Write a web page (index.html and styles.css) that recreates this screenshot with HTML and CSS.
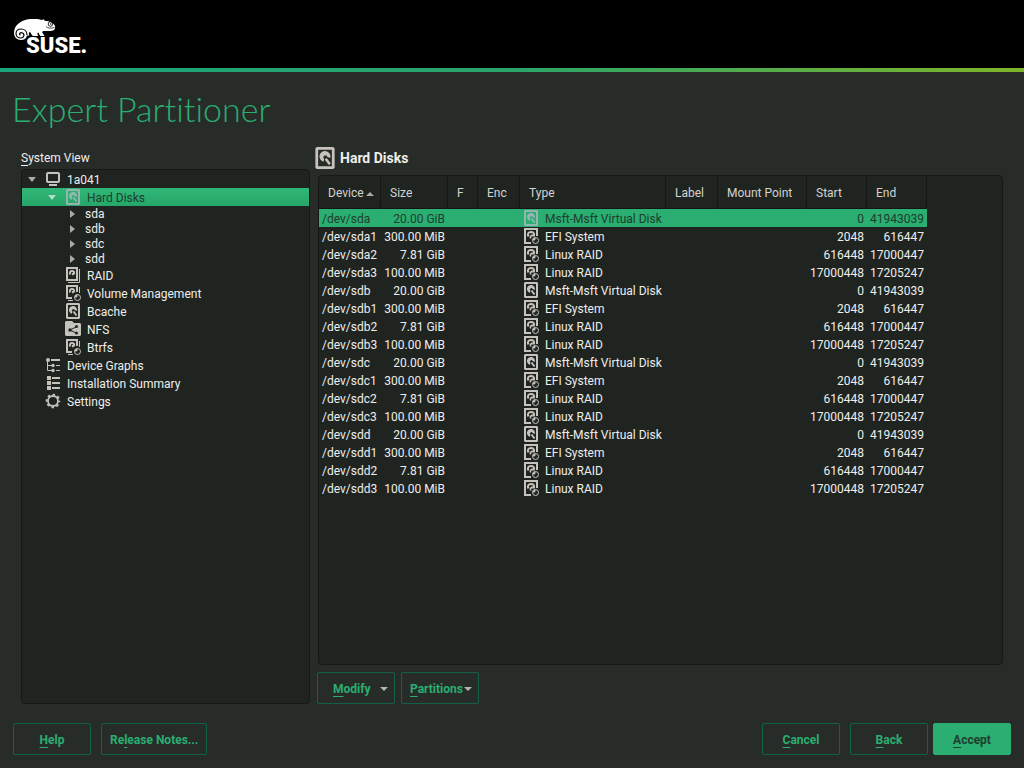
FILE: index.html
```html
<!DOCTYPE html>
<html lang="en">
<head>
<meta charset="utf-8">
<meta name="viewport" content="width=device-width, initial-scale=1">
<title>Expert Partitioner</title>
<link rel="stylesheet" href="styles.css">
</head>
<body>
<svg class="sprites" aria-hidden="true">
  <symbol id="disk" viewBox="0 0 16 16">
    <path fill="currentColor" fill-rule="evenodd" d="M2 0h12l1 1v14l-1 1H2l-1-1V1zM3 2v12h10V2z"/>
    <path fill="currentColor" d="M7 10.800A4 4 0 1 1 11.800 8L9.600 7A1.400 1.400 0 1 0 7.400 8.600z"/>
    <path stroke="currentColor" stroke-width="1.800" d="M8.500 8.500l3 4"/>
  </symbol>
  <symbol id="raid" viewBox="0 0 16 16">
    <path fill="none" stroke="currentColor" stroke-width="2" d="M2 1h10v12H2z"/>
    <path fill="none" stroke="currentColor" d="M14.500 2v13.500H3"/>
    <path fill="none" stroke="currentColor" stroke-width="2" d="M5 7.500C4.500 5 5.500 4 7 4s2.500 1 2 2.500L7 7.500"/>
  </symbol>
  <symbol id="volume" viewBox="0 0 16 16">
    <path fill="none" stroke="currentColor" stroke-width="2" d="M7 13H2V1h10v6"/>
    <path fill="none" stroke="currentColor" d="M14.500 2v6M3 15.500h5"/>
    <path fill="none" stroke="currentColor" stroke-width="2" d="M5 7.500C4.500 5 5.500 4 7 4s2.500 1 2 2.500L7 7.500"/>
    <circle cx="12.500" cy="12.500" r="3" fill="none" stroke="currentColor" stroke-width="1"/>
    <path fill="currentColor" d="M9.500 12.500a3 3 0 0 1 3-3v2l-1 1z"/>
  </symbol>
  <symbol id="partition" viewBox="0 0 16 16">
    <path fill="none" stroke="currentColor" stroke-width="2" d="M8 15H2V1h12v7"/>
    <path fill="none" stroke="currentColor" stroke-width="2" d="M5.500 8.500C4 6 5.500 4 8 4s3.500 1.500 3 3.500L8 7.500"/>
    <path stroke="currentColor" stroke-width="1.600" d="M7.500 7.500v3"/>
    <circle cx="12.500" cy="12.500" r="3" fill="none" stroke="currentColor" stroke-width="1"/>
    <path fill="currentColor" d="M9.500 12.500a3 3 0 0 1 3-3v2l-1 1z"/>
  </symbol>
  <symbol id="monitor" viewBox="0 0 16 16">
    <rect x="2" y="2" width="12" height="9" rx="1" fill="none" stroke="currentColor" stroke-width="2"/>
    <path fill="currentColor" d="M4 13h8v2H4z"/>
  </symbol>
  <symbol id="share" viewBox="0 0 16 16">
    <path fill="currentColor" d="M0 1l1-1h6l2 2h6l1 1v11l-1 1H1l-1-1z"/>
    <path fill="none" stroke="#1f2421" d="M12 5.500L5 9l7 3.500"/>
    <g fill="#1f2421"><circle cx="11.500" cy="5.500" r="1.500"/><circle cx="5" cy="9" r="1.700"/><circle cx="11.500" cy="12" r="1.500"/></g>
  </symbol>
  <symbol id="graph" viewBox="0 0 16 16">
    <g fill="currentColor"><circle cx="3" cy="3" r="2"/><circle cx="8" cy="8.500" r="1.700"/><circle cx="8" cy="13.500" r="1.700"/><path d="M6 2h9v2H6zM11 8h4v1h-4zM11 13h4v1h-4z"/></g>
    <path fill="none" stroke="currentColor" d="M2.500 4v9.500H7M2.500 8.500H7"/>
  </symbol>
  <symbol id="list" viewBox="0 0 16 16">
    <path fill="currentColor" d="M2 1h4v4H2zM2 6h4v4H2zM2 11h4v4H2zM7 2h8v2H7zM7 7h8v2H7zM7 12h8v2H7z"/>
  </symbol>
  <symbol id="gear" viewBox="0 0 16 16">
    <circle cx="8" cy="8" r="5" fill="none" stroke="currentColor" stroke-width="1.800"/>
    <circle cx="8" cy="8" r="6.400" fill="none" stroke="currentColor" stroke-width="1.800" stroke-dasharray="2.500 2.526" stroke-dashoffset="1.250"/>
  </symbol>
</svg>

<header class="banner">
  <div class="logo">
    <svg class="chameleon" viewBox="0 0 42 22" aria-hidden="true">
      <path fill="#fff" d="M0 14C0 6 7 1 16 0c5-.5 9 0 12 1l2-.8.5 1.500C36 2 40 4 41 7c.3 2 0 4-2 4.500-3 .8-6 .5-8 .5-3 0-3.500 1-2 2.500l1.500 2.500h-4c-1-1-1.500-2-2-3.500-1 .2-1.500 1-1 2l.7 1.500H19c-1.500-1-1.500-2-2.500-3.500-1.500-.5-2 .5-1.500 2l.5 1H13c-.5 3-3 4.500-6 4.500-4 0-7-3-7-7z"/>
      <path fill="none" stroke="#000" stroke-width="1.200" d="M13 16c0-4-3-6-6-6s-5 2-5 4.500S4 19 7 19s4-4 1.500-5-4 1.500-2 2"/>
      <circle cx="36.500" cy="5" r="2.300" fill="none" stroke="#000" stroke-width=".8"/><circle cx="36.800" cy="5" r=".8"/>
      <path fill="none" stroke="#000" stroke-width=".7" d="M32 7.500c2 2 5 2 8.500 1"/>
    </svg>
    <span class="wordmark">SUSE.</span>
  </div>
</header>

<main class="page">
  <h1 class="title">Expert Partitioner</h1>
  <div class="workspace">
    <section class="sidebar">
      <h2 class="tree-label" id="tree-label"><u>S</u>ystem View</h2>
      <ul class="tree" role="tree" aria-labelledby="tree-label">
        <li class="node" role="treeitem"><button class="toggle open" aria-label="Collapse 1a041"></button><svg class="icon"><use href="#monitor"/></svg><span>1a041</span></li>
        <li class="node level-1 selected" role="treeitem" aria-selected="true"><button class="toggle open" aria-label="Collapse Hard Disks"></button><svg class="icon"><use href="#disk"/></svg><span>Hard Disks</span></li>
        <li class="node disk" role="treeitem"><button class="toggle" aria-label="Expand sda"></button><span>sda</span></li>
        <li class="node disk" role="treeitem"><button class="toggle" aria-label="Expand sdb"></button><span>sdb</span></li>
        <li class="node disk" role="treeitem"><button class="toggle" aria-label="Expand sdc"></button><span>sdc</span></li>
        <li class="node disk" role="treeitem"><button class="toggle" aria-label="Expand sdd"></button><span>sdd</span></li>
        <li class="node level-2" role="treeitem"><svg class="icon"><use href="#raid"/></svg><span>RAID</span></li>
        <li class="node level-2" role="treeitem"><svg class="icon"><use href="#volume"/></svg><span>Volume Management</span></li>
        <li class="node level-2" role="treeitem"><svg class="icon"><use href="#disk"/></svg><span>Bcache</span></li>
        <li class="node level-2" role="treeitem"><svg class="icon"><use href="#share"/></svg><span>NFS</span></li>
        <li class="node level-2" role="treeitem"><svg class="icon"><use href="#volume"/></svg><span>Btrfs</span></li>
        <li class="node leaf" role="treeitem"><svg class="icon"><use href="#graph"/></svg><span>Device Graphs</span></li>
        <li class="node leaf" role="treeitem"><svg class="icon"><use href="#list"/></svg><span>Installation Summary</span></li>
        <li class="node leaf" role="treeitem"><svg class="icon"><use href="#gear"/></svg><span>Settings</span></li>
      </ul>
    </section>
    <section class="content">
      <h2 class="heading"><svg class="heading-icon"><use href="#disk"/></svg>Hard Disks</h2>
      <div class="table-frame">
        <table class="devices">
          <colgroup><col class="c-device"><col class="c-size"><col class="c-f"><col class="c-enc"><col class="c-type"><col class="c-label"><col class="c-mount"><col class="c-start"><col class="c-end"></colgroup>
          <thead><tr><th class="sorted">Device</th><th>Size</th><th>F</th><th>Enc</th><th>Type</th><th>Label</th><th>Mount Point</th><th>Start</th><th>End</th></tr></thead>
          <tbody>
            <tr class="selected"><td>/dev/sda</td><td class="num">20.00 GiB</td><td></td><td></td><td class="type"><svg class="icon"><use href="#disk"/></svg>Msft-Msft Virtual Disk</td><td></td><td></td><td class="num">0</td><td class="num">41943039</td></tr>
            <tr><td>/dev/sda1</td><td class="num">300.00 MiB</td><td></td><td></td><td class="type"><svg class="icon"><use href="#partition"/></svg>EFI System</td><td></td><td></td><td class="num">2048</td><td class="num">616447</td></tr>
            <tr><td>/dev/sda2</td><td class="num">7.81 GiB</td><td></td><td></td><td class="type"><svg class="icon"><use href="#partition"/></svg>Linux RAID</td><td></td><td></td><td class="num">616448</td><td class="num">17000447</td></tr>
            <tr><td>/dev/sda3</td><td class="num">100.00 MiB</td><td></td><td></td><td class="type"><svg class="icon"><use href="#partition"/></svg>Linux RAID</td><td></td><td></td><td class="num">17000448</td><td class="num">17205247</td></tr>
            <tr><td>/dev/sdb</td><td class="num">20.00 GiB</td><td></td><td></td><td class="type"><svg class="icon"><use href="#disk"/></svg>Msft-Msft Virtual Disk</td><td></td><td></td><td class="num">0</td><td class="num">41943039</td></tr>
            <tr><td>/dev/sdb1</td><td class="num">300.00 MiB</td><td></td><td></td><td class="type"><svg class="icon"><use href="#partition"/></svg>EFI System</td><td></td><td></td><td class="num">2048</td><td class="num">616447</td></tr>
            <tr><td>/dev/sdb2</td><td class="num">7.81 GiB</td><td></td><td></td><td class="type"><svg class="icon"><use href="#partition"/></svg>Linux RAID</td><td></td><td></td><td class="num">616448</td><td class="num">17000447</td></tr>
            <tr><td>/dev/sdb3</td><td class="num">100.00 MiB</td><td></td><td></td><td class="type"><svg class="icon"><use href="#partition"/></svg>Linux RAID</td><td></td><td></td><td class="num">17000448</td><td class="num">17205247</td></tr>
            <tr><td>/dev/sdc</td><td class="num">20.00 GiB</td><td></td><td></td><td class="type"><svg class="icon"><use href="#disk"/></svg>Msft-Msft Virtual Disk</td><td></td><td></td><td class="num">0</td><td class="num">41943039</td></tr>
            <tr><td>/dev/sdc1</td><td class="num">300.00 MiB</td><td></td><td></td><td class="type"><svg class="icon"><use href="#partition"/></svg>EFI System</td><td></td><td></td><td class="num">2048</td><td class="num">616447</td></tr>
            <tr><td>/dev/sdc2</td><td class="num">7.81 GiB</td><td></td><td></td><td class="type"><svg class="icon"><use href="#partition"/></svg>Linux RAID</td><td></td><td></td><td class="num">616448</td><td class="num">17000447</td></tr>
            <tr><td>/dev/sdc3</td><td class="num">100.00 MiB</td><td></td><td></td><td class="type"><svg class="icon"><use href="#partition"/></svg>Linux RAID</td><td></td><td></td><td class="num">17000448</td><td class="num">17205247</td></tr>
            <tr><td>/dev/sdd</td><td class="num">20.00 GiB</td><td></td><td></td><td class="type"><svg class="icon"><use href="#disk"/></svg>Msft-Msft Virtual Disk</td><td></td><td></td><td class="num">0</td><td class="num">41943039</td></tr>
            <tr><td>/dev/sdd1</td><td class="num">300.00 MiB</td><td></td><td></td><td class="type"><svg class="icon"><use href="#partition"/></svg>EFI System</td><td></td><td></td><td class="num">2048</td><td class="num">616447</td></tr>
            <tr><td>/dev/sdd2</td><td class="num">7.81 GiB</td><td></td><td></td><td class="type"><svg class="icon"><use href="#partition"/></svg>Linux RAID</td><td></td><td></td><td class="num">616448</td><td class="num">17000447</td></tr>
            <tr><td>/dev/sdd3</td><td class="num">100.00 MiB</td><td></td><td></td><td class="type"><svg class="icon"><use href="#partition"/></svg>Linux RAID</td><td></td><td></td><td class="num">17000448</td><td class="num">17205247</td></tr>
          </tbody>
        </table>
      </div>
      <div class="actions">
        <button class="btn menu"><span><u>M</u>odify</span></button>
        <button class="btn menu tight"><span><u>P</u>artitions</span></button>
      </div>
    </section>
  </div>
</main>

<footer class="footer">
  <button class="btn"><span><u>H</u>elp</span></button>
  <button class="btn"><span>Re<u>l</u>ease Notes...</span></button>
  <div class="wizard">
    <button class="btn"><span><u>C</u>ancel</span></button>
    <button class="btn"><span><u>B</u>ack</span></button>
    <button class="btn primary"><span><u>A</u>ccept</span></button>
  </div>
</footer>
</body>
</html>
```

FILE: styles.css
```css
* { box-sizing: border-box; }
body {
  margin: 0;
  min-height: 100vh;
  display: flex;
  flex-direction: column;
  background: #282c29;
  color: #eeeeec;
  font: 12px/18px Roboto, "Liberation Sans", sans-serif;
}
h1, h2, ul { margin: 0; padding: 0; font-weight: 400; }
u { text-decoration: underline; text-underline-offset: 3px; text-decoration-thickness: 1px; text-decoration-skip-ink: none; }
.sprites { position: absolute; width: 0; height: 0; }
.icon { width: 16px; height: 16px; flex: none; color: #c6c2bc; }

.banner {
  height: 72px;
  padding: 19px 14px 0;
  background: #000;
  border-bottom: 4px solid;
  border-image: linear-gradient(90deg, #1ba47c, #2aa56a 50%, #80b52a) 1;
}
.logo { display: grid; width: 80px; }
.chameleon { grid-area: 1 / 1; width: 42px; height: 22px; }
.wordmark {
  grid-area: 1 / 1;
  padding: 16px 0 0 12px;
  color: #fff;
  font: 900 22px/22px Roboto, sans-serif;
}

.page { flex: 1; display: flex; flex-direction: column; padding: 16px 21px 0; }
.title {
  margin-left: -9px;
  color: #2aae71;
  font: 300 34px/42px Lato, sans-serif;
  font-variant-ligatures: none;
}
.workspace {
  flex: 1;
  display: grid;
  grid-template-columns: 289fr 685fr;
  column-gap: 8px;
  padding-top: 18px;
}
.sidebar, .content { display: flex; flex-direction: column; min-width: 0; }
.tree-label { font-size: 12px; line-height: 18px; padding: 1px 0 2px; }
.tree {
  flex: 1;
  list-style: none;
  background: #1f2421;
  border: 1px solid #151816;
  border-radius: 4px;
}
.node { display: flex; align-items: center; height: 18px; padding-left: 4px; }
.node span { padding: 2px 0 0 6px; }
.level-1 { padding-left: 24px; }
.level-2 { padding-left: 43px; }
.leaf { padding-left: 23px; }
.disk { height: 15px; padding-left: 44px; }
.disk span { padding-top: 0; }
.node.selected { background: linear-gradient(#30b878, #27a66a); color: #1f3d2d; }
.toggle {
  width: 12px;
  height: 12px;
  margin-right: 7px;
  padding: 0;
  border: 0;
  background: none;
  display: grid;
  place-items: center;
}
.disk .toggle { margin-right: 1px; }
.toggle::before { content: ""; border: 4px solid transparent; border-left: 5px solid #aaa; border-right: 0; }
.toggle.open::before { border: 4px solid transparent; border-top: 5px solid #aaa; border-bottom: 0; }
.selected .toggle.open::before { border-top-color: #b4dcc8; }
.selected .icon { color: #94b5b0; }

.heading { display: flex; align-items: center; gap: 4px; height: 22px; font: 700 14px/20px Roboto, sans-serif; margin: 0 0 6px -4px; }
.heading-icon { width: 22px; height: 22px; color: #c6c2bc; }
.workspace .content { margin-top: -1px; }
.table-frame {
  flex: 1;
  background: #1f2421;
  border: 1px solid #151816;
  border-radius: 4px;
  overflow: hidden;
}
.devices { width: 608px; table-layout: fixed; border-collapse: separate; border-spacing: 0; }
.c-device { width: 62px; }
.c-size { width: 67px; }
.c-f { width: 30px; }
.c-enc { width: 42px; }
.c-type { width: 146px; }
.c-label { width: 52px; }
.c-mount { width: 89px; }
.c-start, .c-end { width: 60px; }
th {
  height: 33px;
  padding: 2px 0 0 9px;
  text-align: left;
  font-weight: 400;
  color: #d3d3d0;
  white-space: nowrap;
  border-right: 1px solid #131614;
  border-bottom: 1px solid #131614;
  border-bottom-right-radius: 3px;
}
.sorted::after {
  content: "";
  display: inline-block;
  margin-left: 2px;
  vertical-align: 1px;
  border: 4px solid transparent;
  border-bottom-color: #aaa;
  border-top: 0;
}
td { height: 18px; padding: 2px 3px 0; line-height: 16px; white-space: nowrap; }
.num { padding-left: 0; text-align: right; }
.type { display: flex; align-items: center; gap: 6px; }
.type .icon { margin-top: -2px; }
tr.selected td { background: #2aae71; color: #1f3d2d; }

.actions { display: flex; gap: 6px; padding-top: 7px; margin-left: -1px; }
.btn {
  min-width: 78px;
  height: 32px;
  padding: 1px 8px 0;
  border: 1px solid #116149;
  border-radius: 2px;
  background: transparent;
  color: #2aae71;
  font: 700 12px/18px Roboto, sans-serif;
}
.menu { display: flex; align-items: center; justify-content: space-between; padding: 1px 6px 0 15px; }
.tight { padding-left: 8px; }
.menu::after { content: ""; border: 4px solid transparent; border-top: 4px solid #b3b3b0; border-bottom: 0; }
.primary { background: #2aae71; border-color: #2aae71; color: #1f3d2d; }
.footer { display: flex; gap: 10px; padding: 19px 13px 13px; }
.wizard { display: flex; gap: 10px; margin-left: auto; }
.wizard .primary { margin-left: -5px; }
```
